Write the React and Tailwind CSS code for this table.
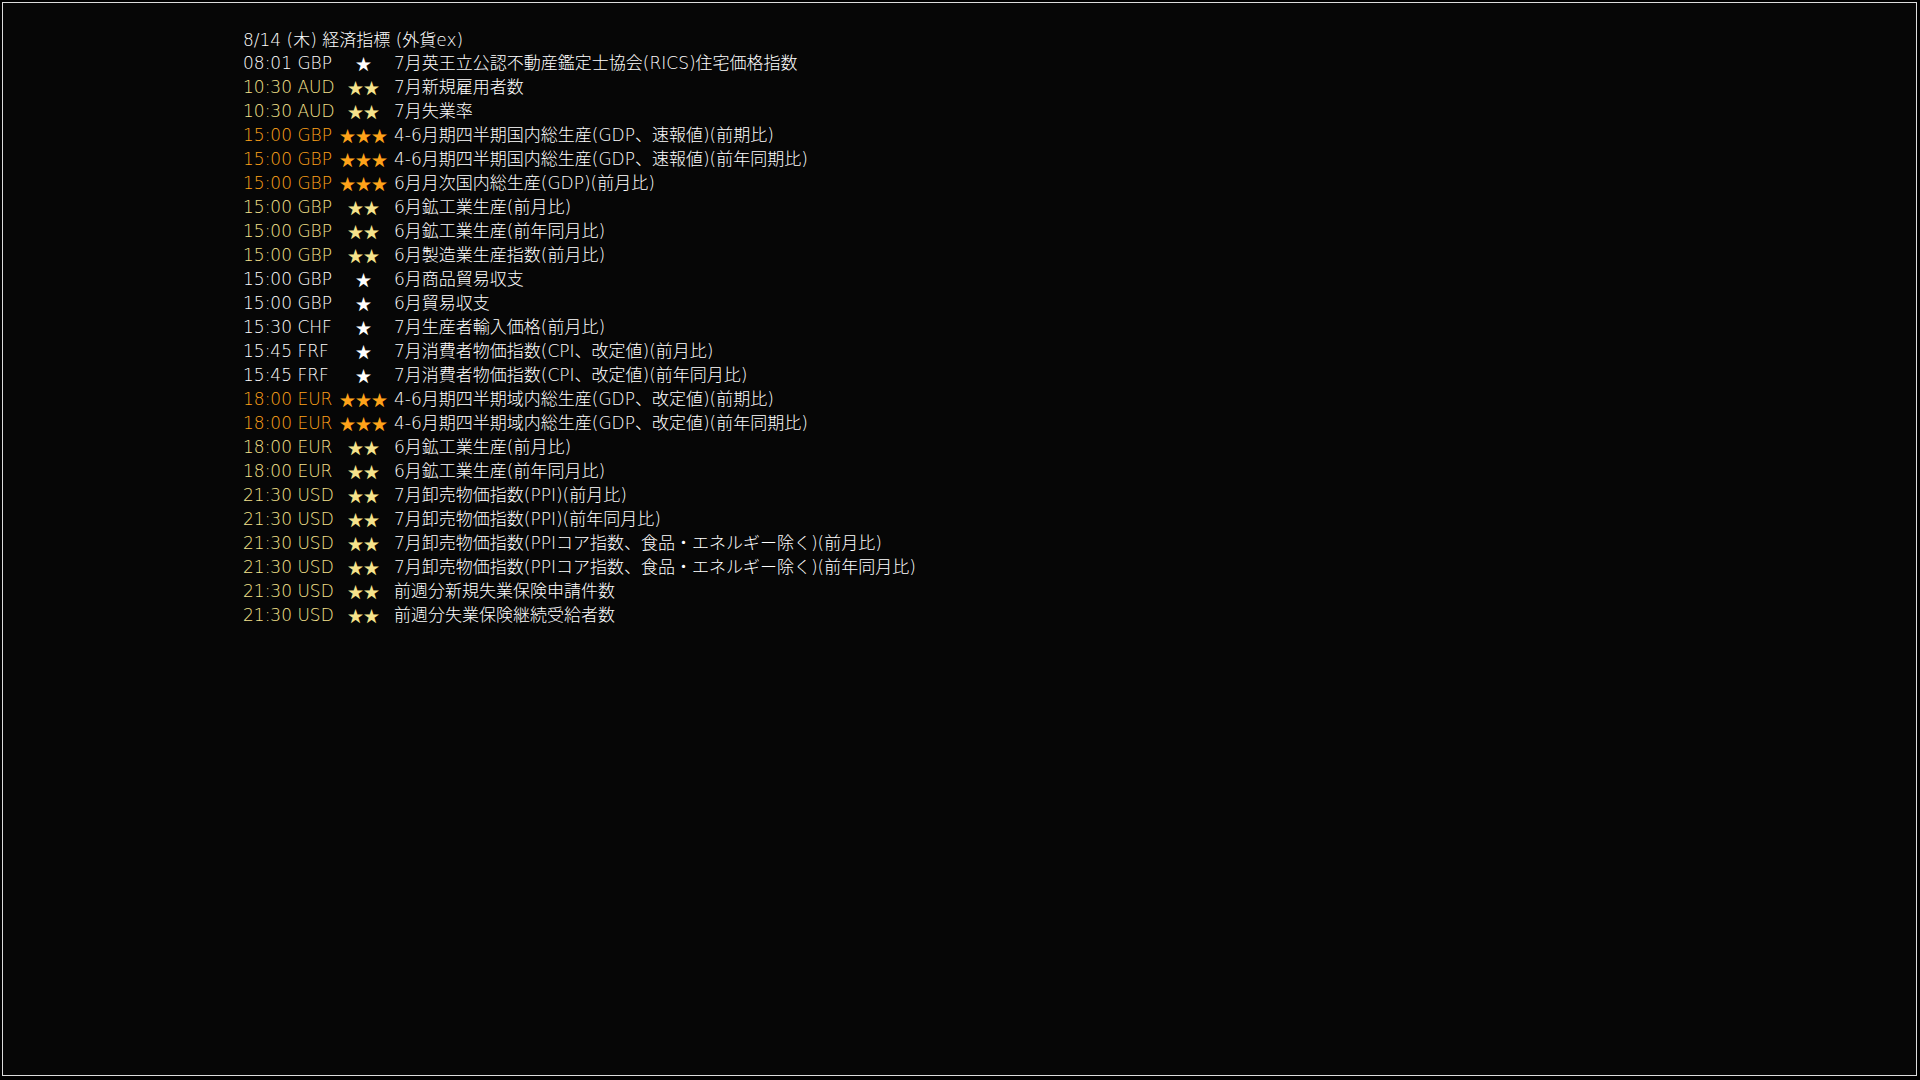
const rows = [
  ["08:01", "GBP", 1, "7月英王立公認不動産鑑定士協会(RICS)住宅価格指数"],
  ["10:30", "AUD", 2, "7月新規雇用者数"],
  ["10:30", "AUD", 2, "7月失業率"],
  ["15:00", "GBP", 3, "4-6月期四半期国内総生産(GDP、速報値)(前期比)"],
  ["15:00", "GBP", 3, "4-6月期四半期国内総生産(GDP、速報値)(前年同期比)"],
  ["15:00", "GBP", 3, "6月月次国内総生産(GDP)(前月比)"],
  ["15:00", "GBP", 2, "6月鉱工業生産(前月比)"],
  ["15:00", "GBP", 2, "6月鉱工業生産(前年同月比)"],
  ["15:00", "GBP", 2, "6月製造業生産指数(前月比)"],
  ["15:00", "GBP", 1, "6月商品貿易収支"],
  ["15:00", "GBP", 1, "6月貿易収支"],
  ["15:30", "CHF", 1, "7月生産者輸入価格(前月比)"],
  ["15:45", "FRF", 1, "7月消費者物価指数(CPI、改定値)(前月比)"],
  ["15:45", "FRF", 1, "7月消費者物価指数(CPI、改定値)(前年同月比)"],
  ["18:00", "EUR", 3, "4-6月期四半期域内総生産(GDP、改定値)(前期比)"],
  ["18:00", "EUR", 3, "4-6月期四半期域内総生産(GDP、改定値)(前年同期比)"],
  ["18:00", "EUR", 2, "6月鉱工業生産(前月比)"],
  ["18:00", "EUR", 2, "6月鉱工業生産(前年同月比)"],
  ["21:30", "USD", 2, "7月卸売物価指数(PPI)(前月比)"],
  ["21:30", "USD", 2, "7月卸売物価指数(PPI)(前年同月比)"],
  ["21:30", "USD", 2, "7月卸売物価指数(PPIコア指数、食品・エネルギー除く)(前月比)"],
  ["21:30", "USD", 2, "7月卸売物価指数(PPIコア指数、食品・エネルギー除く)(前年同月比)"],
  ["21:30", "USD", 2, "前週分新規失業保険申請件数"],
  ["21:30", "USD", 2, "前週分失業保険継続受給者数"],
];

// star rank -> colour of time/currency and stars
const rankColor = {
  1: "text-white",
  2: "text-[#f6e38c]",
  3: "text-[#ffa31a]",
};

export default function App() {
  return (
    <div className="w-[1920px] h-[1080px] bg-black overflow-hidden font-['DejaVu_Sans','Noto_Sans_CJK_JP',sans-serif] text-[17px] font-light">
      <div className="m-[2px] w-[1915px] h-[1074px] border border-[#dcdcdc] bg-[#060606] pl-[240px] pt-[26px]">
        <div className="h-[22px] leading-[22px] text-white whitespace-nowrap">8/14 (木) 経済指標 (外貨ex)</div>
        {rows.map(([time, ccy, rank, label], i) => (
          <div key={i} className="flex h-[24px] leading-[24px]">
            <div className={`w-[90px] whitespace-nowrap ${rankColor[rank]}`}>
              {time} {ccy}
            </div>
            <div className={`w-[61px] flex justify-center font-['Noto_Sans_CJK_JP',sans-serif] text-[16px] ${rankColor[rank]}`}>
              {"★".repeat(rank)}
            </div>
            <div className="text-white whitespace-nowrap">{label}</div>
          </div>
        ))}
      </div>
    </div>
  );
}
